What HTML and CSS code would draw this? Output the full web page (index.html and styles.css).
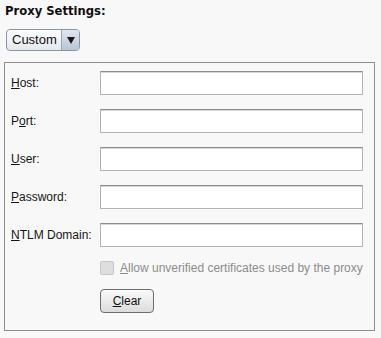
FILE: index.html
```html
<!DOCTYPE html>
<html lang="en">
<head>
    <meta charset="UTF-8">
    <title>Proxy Settings</title>
    <link rel="stylesheet" href="styles.css">
</head>
<body>
    <div class="page">
        <h1 class="title">Proxy Settings:</h1>

        <div class="combo">
            <span class="combo-value">Custom</span>
            <span class="combo-arrow">
                <svg width="8" height="7" viewBox="0 0 8 7"><path d="M0 0 L8 0 L4 7 Z" fill="#1a1a1a"/></svg>
            </span>
        </div>

        <div class="panel">
            <div class="row">
                <label class="label" for="host"><u>H</u>ost:</label>
                <input class="field" type="text" id="host">
            </div>
            <div class="row">
                <label class="label" for="port">P<u>o</u>rt:</label>
                <input class="field" type="text" id="port">
            </div>
            <div class="row">
                <label class="label" for="user"><u>U</u>ser:</label>
                <input class="field" type="text" id="user">
            </div>
            <div class="row">
                <label class="label" for="password"><u>P</u>assword:</label>
                <input class="field" type="password" id="password">
            </div>
            <div class="row">
                <label class="label" for="domain"><u>N</u>TLM Domain:</label>
                <input class="field" type="text" id="domain">
            </div>
            <div class="row">
                <span class="label"></span>
                <div class="check">
                    <span class="check-box"></span>
                    <span class="check-text"><u>A</u>llow unverified certificates used by the proxy</span>
                </div>
            </div>
            <div class="row">
                <span class="label"></span>
                <button class="button"><u>C</u>lear</button>
            </div>
        </div>
    </div>
</body>
</html>
```

FILE: styles.css
```css
body {
    margin: 0;
    background-color: #f8f8f8;
    font-family: "Liberation Sans", Arial, sans-serif;
    font-size: 12px;
    color: #1e1e1e;
}
.page {
    padding: 3px 0 0 4px;
    width: 371px;
}
.title {
    margin: 0 0 0 1px;
    font-family: "DejaVu Sans", Tahoma, sans-serif;
    font-size: 11.6px;
    font-weight: bold;
    line-height: 16px;
    color: #101010;
}
.combo {
    display: flex;
    margin: 10px 0 0 2px;
    width: 74px;
    height: 22px;
    box-sizing: border-box;
    border: 1px solid #8a96a3;
    border-radius: 4px;
    background: linear-gradient(#fdfdfd, #e4e8ec);
    overflow: hidden;
}
.combo-value {
    flex: 1;
    padding-left: 5px;
    font-size: 13px;
    line-height: 20px;
    color: #111;
}
.combo-arrow {
    display: flex;
    align-items: center;
    justify-content: center;
    width: 17px;
    border-left: 1px solid #9aa6b3;
    background: linear-gradient(#dfe6ee, #b9c6d4);
}
.panel {
    margin-top: 11px;
    padding: 8px 11px 17px 6px;
    border: 1px solid #8e8e8e;
    display: flex;
    flex-direction: column;
    gap: 14px;
}
.row {
    display: flex;
    align-items: center;
}
.label {
    width: 89px;
    flex-shrink: 0;
    font-size: 12px;
    color: #161616;
}
.field {
    flex: 1;
    height: 24px;
    margin: 0;
    box-sizing: border-box;
    border: 1px solid #b4b4b4;
    border-top-color: #8c8c8c;
    box-shadow: inset 0 1px 0 #d8d8d8;
    background: #fff;
    outline: none;
}
.check {
    display: flex;
    align-items: center;
    gap: 6px;
}
.check-box {
    width: 14px;
    height: 14px;
    box-sizing: border-box;
    border: 1px solid #c6c6c6;
    border-radius: 2px;
    background: #dedede;
}
.check-text {
    color: #8c8c8c;
    font-size: 12px;
}
.button {
    width: 54px;
    height: 24px;
    padding: 0;
    border: 1px solid #6e6e6e;
    border-radius: 4px;
    background: linear-gradient(#fafafa, #dcdcdc);
    font-family: "Liberation Sans", Arial, sans-serif;
    font-size: 12px;
    color: #111;
}
```
